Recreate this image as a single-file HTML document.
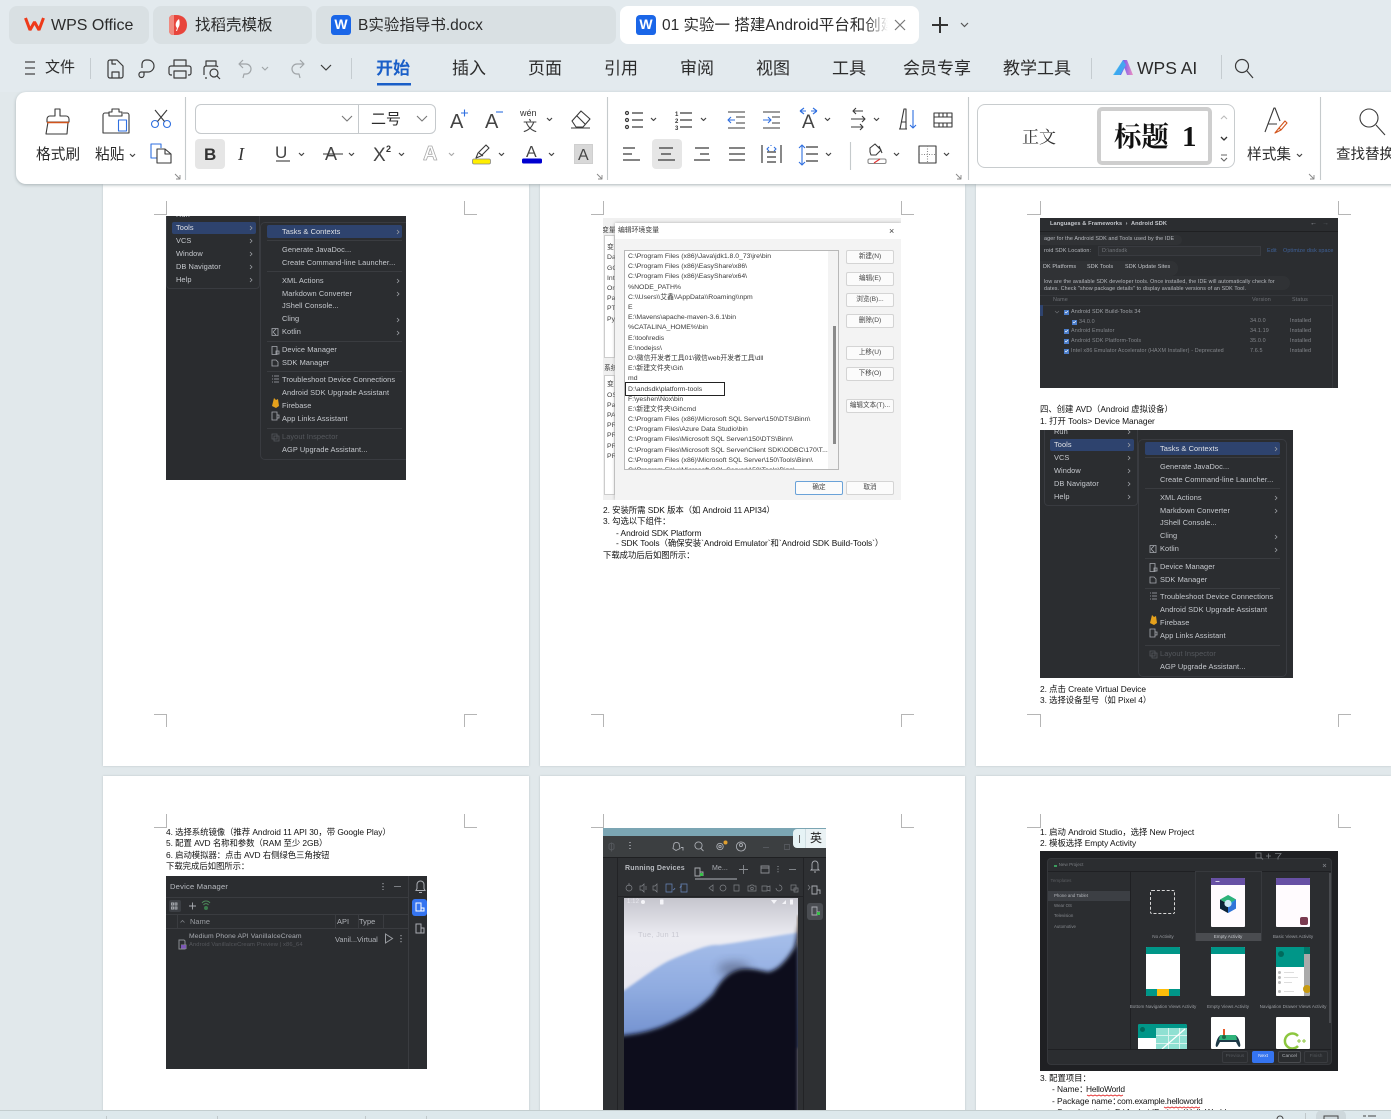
<!DOCTYPE html>
<html lang="zh-CN"><head><meta charset="utf-8"><title>WPS Office</title>
<style>
html,body{margin:0;padding:0;width:1391px;height:1119px;overflow:hidden;background:#e1e8eb}
body{position:relative;font-family:"Liberation Sans","Noto Sans CJK SC",sans-serif;color:#222}
.t{position:absolute;white-space:nowrap;line-height:0}
.a{position:absolute}
svg{position:absolute;left:0;top:0;overflow:visible}
.tab{position:absolute;top:6px;height:38px;border-radius:8px;background:#d9e0e3}
.m{font-size:17px;color:#2b2b2b;top:69px}
.r{font-size:14.7px;color:#2b2b2b}
.page{position:absolute;background:#fff;box-shadow:0 0 2px #b9c3c6}
.d{position:absolute;white-space:nowrap;line-height:0;font-size:8.4px;letter-spacing:-.05px;color:#111;font-family:"Liberation Sans","Noto Sans CJK SC",sans-serif}
.i{position:absolute;overflow:hidden;background:#2b2d30;filter:blur(.25px)}
.x{position:absolute;white-space:nowrap;line-height:0;font-size:7.4px;letter-spacing:.08px;color:#c6c9ce}
.w{position:absolute;white-space:nowrap;line-height:0;font-size:6.85px;color:#3a3a3a;font-family:"Liberation Sans","Noto Sans CJK SC",sans-serif}
.b{position:absolute;background:#fbfbfb;border:1px solid #d4d4d4;border-radius:2px;width:46px;height:12px;font-size:6.6px;line-height:12px;text-align:center;color:#444}
.s{position:absolute;white-space:nowrap;line-height:0;font-size:5.4px;letter-spacing:.12px;color:#a9acb2}
.n{position:absolute;white-space:nowrap;line-height:0;font-size:4.6px;color:#9a9da2;transform:translateX(-50%)}
.card{position:absolute;background:#fffbfe;overflow:hidden;border-radius:1px}
.sub{position:absolute;left:0;right:0;top:0;height:7px}
</style></head><body>

<!-- pages row 1 -->
<div class="page" style="left:103px;top:170px;width:426px;height:596px"></div>
<div class="page" style="left:540px;top:170px;width:425px;height:596px"></div>
<div class="page" style="left:976px;top:170px;width:415px;height:596px"></div>
<!-- pages row 2 -->
<div class="page" style="left:103px;top:776px;width:426px;height:340px"></div>
<div class="page" style="left:540px;top:776px;width:425px;height:340px"></div>
<div class="page" style="left:976px;top:776px;width:415px;height:340px"></div>

<!-- crop marks -->
<svg width="1391" height="1119" fill="none" stroke="#b5b5b5" stroke-width="1">
<path d="M154 214.5h13M166.5 201v14M464.5 201v14M464 214.5h13M154 714.5h13M166.5 714v13M464.5 714v13M464 714.5h13"/>
<path d="M591 214.5h13M603.5 201v14M901.5 201v14M901 214.5h13M591 714.5h13M603.5 714v13M901.5 714v13M901 714.5h13"/>
<path d="M1027 214.5h13M1040.5 201v14M1338.5 201v14M1338 214.5h13M1027 714.5h13M1040.5 714v13M1338.5 714v13M1338 714.5h13"/>
<path d="M154 827.5h13M166.5 814v14M464.5 814v14M464 827.5h13"/>
<path d="M591 827.5h13M603.5 814v14M901.5 814v14M901 827.5h13"/>
<path d="M1027 827.5h13M1040.5 814v14M1338.5 814v14M1338 827.5h13"/>
</svg>

<!-- image 1: tools menu -->
<div class="i" style="left:166px;top:216px;width:240px;height:264px">
 <div class="a" style="left:0;top:0;width:240px;height:264px">
  <div class="a" style="left:0;top:-20px;width:94px;height:93px;background:#2b2d30;border:1px solid #393b40;border-radius:4px;box-sizing:border-box"></div>
  <div class="a" style="left:0;top:73px;width:94px;height:191px;background:#2a2c2f"></div>
  <div class="a" style="left:94px;top:6px;width:160px;height:238px;background:#2b2d30;border:1px solid #393b40;border-radius:5px;box-sizing:border-box"></div>
  <div class="a" style="left:6px;top:5.5px;width:84px;height:12.5px;background:#2e436e;border-radius:2px"></div>
  <div class="a" style="left:101px;top:9px;width:135px;height:13px;background:#2e436e;border-radius:2px"></div>
  <svg width="240" height="264" fill="none" stroke="#3a3c40" stroke-width="1">
   <path d="M101 24.5h135M101 55.5h135M101 125.5h135M101 155.5h135M101 212.5h135"/>
   <path stroke="#9a9da2" stroke-width=".8" d="M84 10l2 2-2 2M84 23l2 2-2 2M84 36l2 2-2 2M84 49l2 2-2 2M84 62l2 2-2 2M231 14l2 2-2 2M231 63l2 2-2 2M231 76l2 2-2 2M231 102l2 2-2 2M231 115l2 2-2 2"/>
   <path stroke="#a9acb2" stroke-width=".8" d="M106 112.5h6v7h-6zM107 116l3-3M107 116l3 3M106 130.5h5v8h-5zM110 135h3v3h-3zM106 144h4l2 2v4h-6zM106 160h1M106 163h1M106 166h1M108 160h5M108 163h5M108 166h5M106 196h5v8h-5zM111 199h2v3h-2z"/>
   <path stroke="#55585d" stroke-width=".8" d="M106 218h5v5h-5zM108 220h5v5h-5z"/>
   <path fill="#e5a11c" stroke="none" d="M106 190l2-8 2 2 2-1 1 7-3 2z"/>
  </svg>
  <div class="x" style="left:10px;top:-1px">Run</div>
  <div class="x" style="left:10px;top:12px;color:#dfe1e5">Tools</div>
  <div class="x" style="left:10px;top:25px">VCS</div>
  <div class="x" style="left:10px;top:38px">Window</div>
  <div class="x" style="left:10px;top:51px">DB Navigator</div>
  <div class="x" style="left:10px;top:64px">Help</div>
  <div class="x" style="left:116px;top:15.5px;color:#dfe1e5">Tasks &amp; Contexts</div>
  <div class="x" style="left:116px;top:33.7px">Generate JavaDoc...</div>
  <div class="x" style="left:116px;top:46.7px">Create Command-line Launcher...</div>
  <div class="x" style="left:116px;top:64.5px">XML Actions</div>
  <div class="x" style="left:116px;top:77.5px">Markdown Converter</div>
  <div class="x" style="left:116px;top:90.3px">JShell Console...</div>
  <div class="x" style="left:116px;top:103px">Cling</div>
  <div class="x" style="left:116px;top:116px">Kotlin</div>
  <div class="x" style="left:116px;top:133.7px">Device Manager</div>
  <div class="x" style="left:116px;top:146.7px">SDK Manager</div>
  <div class="x" style="left:116px;top:164px">Troubleshoot Device Connections</div>
  <div class="x" style="left:116px;top:177px">Android SDK Upgrade Assistant</div>
  <div class="x" style="left:116px;top:190px">Firebase</div>
  <div class="x" style="left:116px;top:203px">App Links Assistant</div>
  <div class="x" style="left:116px;top:221px;color:#55585d">Layout Inspector</div>
  <div class="x" style="left:116px;top:234px">AGP Upgrade Assistant...</div>
 </div>
</div>

<!-- image 2: env var dialog -->
<div class="a" style="left:603px;top:218px;width:298px;height:282px;background:#f0f0f0;overflow:hidden;filter:blur(.25px)">
 <div class="a" style="left:1px;top:17px;width:11px;height:123px;background:#fff;border:1px solid #ccc;box-sizing:border-box"></div>
 <div class="a" style="left:1px;top:157px;width:11px;height:120px;background:#fff;border:1px solid #ccc;box-sizing:border-box"></div>
 <div class="w" style="left:-1px;top:13px">变量</div>
 <div class="w" style="left:4px;top:30px">变</div><div class="w" style="left:4px;top:40px">Da</div><div class="w" style="left:4px;top:51px">GC</div><div class="w" style="left:4px;top:61px">Int</div><div class="w" style="left:4px;top:71px">Or</div><div class="w" style="left:4px;top:81px">Pa</div><div class="w" style="left:4px;top:91px">PT</div><div class="w" style="left:4px;top:102px">Py</div>
 <div class="w" style="left:1px;top:151px">系统</div>
 <div class="w" style="left:4px;top:167px">变</div><div class="w" style="left:4px;top:178px">OS</div><div class="w" style="left:4px;top:188px">Pa</div><div class="w" style="left:4px;top:198px">PA</div><div class="w" style="left:4px;top:208px">PR</div><div class="w" style="left:4px;top:218px">PR</div><div class="w" style="left:4px;top:229px">PR</div><div class="w" style="left:4px;top:239px">PR</div>
 <div class="a" style="left:12px;top:5px;width:286px;height:277px;background:#f3f3f3;box-shadow:0 0 3px #aaa"></div>
 <div class="a" style="left:12px;top:5px;width:286px;height:16px;background:#fff"></div>
 <div class="w" style="left:15px;top:13px">编辑环境变量</div>
 <div class="w" style="left:286px;top:13px;font-size:9px">×</div>
 <div class="a" style="left:21px;top:32px;width:215px;height:220px;background:#fff;border:1px solid #b8b8b8;box-sizing:border-box;overflow:hidden">
  <div class="a" style="left:203px;top:0;width:10px;height:218px;background:#f3f3f3"></div>
  <div class="a" style="left:208px;top:75px;width:2.5px;height:118px;background:#8a8a8a"></div>
  <div class="w" style="left:3px;top:6px">C:\Program Files (x86)\Java\jdk1.8.0_73\jre\bin</div>
  <div class="w" style="left:3px;top:16.2px">C:\Program Files (x86)\EasyShare\x86\</div>
  <div class="w" style="left:3px;top:26.4px">C:\Program Files (x86)\EasyShare\x64\</div>
  <div class="w" style="left:3px;top:36.6px">%NODE_PATH%</div>
  <div class="w" style="left:3px;top:46.8px">C:\\Users\\艾鑫\\AppData\\Roaming\\npm</div>
  <div class="w" style="left:3px;top:57px">E</div>
  <div class="w" style="left:3px;top:67.2px">E:\Mavens\apache-maven-3.6.1\bin</div>
  <div class="w" style="left:3px;top:77.4px">%CATALINA_HOME%\bin</div>
  <div class="w" style="left:3px;top:87.5px">E:\tool\redis</div>
  <div class="w" style="left:3px;top:97.7px">E:\nodejss\</div>
  <div class="w" style="left:3px;top:107.9px">D:\微信开发者工具01\微信web开发者工具\dll</div>
  <div class="w" style="left:3px;top:118.1px">E:\新建文件夹\Git\</div>
  <div class="w" style="left:3px;top:128.3px">md</div>
  <div class="w" style="left:3px;top:138.5px">D:\andsdk\platform-tools</div>
  <div class="w" style="left:3px;top:148.7px">F:\yeshen\Nox\bin</div>
  <div class="w" style="left:3px;top:158.9px">E:\新建文件夹\Git\cmd</div>
  <div class="w" style="left:3px;top:169.1px">C:\Program Files (x86)\Microsoft SQL Server\150\DTS\Binn\</div>
  <div class="w" style="left:3px;top:179.3px">C:\Program Files\Azure Data Studio\bin</div>
  <div class="w" style="left:3px;top:189.4px">C:\Program Files\Microsoft SQL Server\150\DTS\Binn\</div>
  <div class="w" style="left:3px;top:199.6px">C:\Program Files\Microsoft SQL Server\Client SDK\ODBC\170\T...</div>
  <div class="w" style="left:3px;top:209.8px">C:\Program Files (x86)\Microsoft SQL Server\150\Tools\Binn\</div>
  <div class="w" style="left:3px;top:220px">C:\Program Files\Microsoft SQL Server\150\Tools\Binn\</div>
 </div>
 <div class="a" style="left:22px;top:164px;width:100px;height:14px;border:1.5px solid #222;box-sizing:border-box"></div>
 <div class="b" style="left:243px;top:32px">新建(N)</div>
 <div class="b" style="left:243px;top:54px">编辑(E)</div>
 <div class="b" style="left:243px;top:75px">浏览(B)...</div>
 <div class="b" style="left:243px;top:96px">删除(D)</div>
 <div class="b" style="left:243px;top:128px">上移(U)</div>
 <div class="b" style="left:243px;top:149px">下移(O)</div>
 <div class="b" style="left:243px;top:181px">编辑文本(T)...</div>
 <div class="b" style="left:192px;top:263px;border-color:#6aa2d8">确定</div>
 <div class="b" style="left:243px;top:263px">取消</div>
</div>

<!-- page 2 text -->
<div class="d" style="left:603px;top:510px">2. 安装所需 SDK 版本（如 Android 11 API34）</div>
<div class="d" style="left:603px;top:521px">3. 勾选以下组件：</div>
<div class="d" style="left:616px;top:532.5px">- Android SDK Platform</div>
<div class="d" style="left:616px;top:543px">- SDK Tools（确保安装`Android Emulator`和`Android SDK Build-Tools`）</div>
<div class="d" style="left:603px;top:555px">下载成功后后如图所示：</div>

<!-- page 3 image 1: SDK -->
<div class="i" style="left:1040px;top:218px;width:298px;height:170px">
 <div class="a" style="left:0;top:13px;width:298px;height:1px;background:#1f2022"></div>
 <div class="a" style="left:-10px;top:17px;width:152px;height:10px;background:#303235;border-radius:5px"></div>
 <div class="a" style="left:-10px;top:43px;width:148px;height:15px;background:#303235;border-radius:7px"></div>
 <div class="a" style="left:-10px;top:58px;width:260px;height:14px;background:#303235;border-radius:7px"></div>
 <div class="a" style="left:58px;top:28px;width:163px;height:10px;background:#2f3134;border:1px solid #393b40;box-sizing:border-box"></div>
 <div class="s" style="left:10px;top:6px;font-weight:bold;font-size:5.6px;color:#c6c9ce">Languages &amp; Frameworks &nbsp;› &nbsp;Android SDK</div>
 <div class="s" style="left:270px;top:6px;font-size:7px;color:#9a9da2">←</div><div class="s" style="left:282px;top:6px;font-size:7px;color:#55585d">→</div>
 <div class="s" style="left:4px;top:21px;color:#b8bbc0">ager for the Android SDK and Tools used by the IDE</div>
 <div class="s" style="left:4px;top:33px;color:#b8bbc0">roid SDK Location:</div>
 <div class="s" style="left:62px;top:33px;color:#75787d">D:\andsdk</div>
 <div class="s" style="left:227px;top:33px;color:#3f6299">Edit</div>
 <div class="s" style="left:243px;top:33px;color:#3f6299">Optimize disk space</div>
 <div class="s" style="left:3px;top:49px;color:#c6c9ce">DK Platforms</div>
 <div class="s" style="left:47px;top:49px;color:#c6c9ce">SDK Tools</div>
 <div class="s" style="left:85px;top:49px;color:#c6c9ce">SDK Update Sites</div>
 <div class="s" style="left:4px;top:64px;font-size:5.3px;color:#b8bbc0">low are the available SDK developer tools. Once installed, the IDE will automatically check for</div>
 <div class="s" style="left:4px;top:71px;font-size:5.3px;color:#b8bbc0">dates. Check "show package details" to display available versions of an SDK Tool.</div>
 <div class="a" style="left:0;top:77px;width:292px;height:1px;background:#35373b"></div>
 <div class="a" style="left:0;top:87px;width:292px;height:1px;background:#35373b"></div>
 <div class="a" style="left:292px;top:77px;width:1px;height:93px;background:#35373b"></div>
 <div class="a" style="left:0;top:87px;width:3px;height:11px;background:#2e436e"></div>
 <div class="s" style="left:13px;top:82px;color:#6f7277">Name</div>
 <div class="s" style="left:212px;top:82px;color:#6f7277">Version</div>
 <div class="s" style="left:252px;top:82px;color:#6f7277">Status</div>
 <div class="a" style="left:24px;top:91.5px;width:5px;height:5px;background:#4a7cc9"></div>
 <div class="a" style="left:32px;top:101.5px;width:5px;height:5px;background:#4a7cc9"></div>
 <div class="a" style="left:24px;top:110.5px;width:5px;height:5px;background:#4a7cc9"></div>
 <div class="a" style="left:24px;top:120.5px;width:5px;height:5px;background:#4a7cc9"></div>
 <div class="a" style="left:24px;top:130.5px;width:5px;height:5px;background:#4a7cc9"></div>
 <svg width="298" height="170" fill="none" stroke="#fff" stroke-width=".6"><path d="M25 94l1 1 2-2M33 104l1 1 2-2M25 113l1 1 2-2M25 123l1 1 2-2M25 133l1 1 2-2"/><path stroke="#6f7277" d="M15 93l2 2 2-2"/></svg>
 <div class="s" style="left:31px;top:94px;color:#a0a3a8">Android SDK Build-Tools 34</div>
 <div class="s" style="left:39px;top:104px;color:#85888d">34.0.0</div>
 <div class="s" style="left:31px;top:113px;color:#85888d">Android Emulator</div>
 <div class="s" style="left:31px;top:123px;color:#85888d">Android SDK Platform-Tools</div>
 <div class="s" style="left:31px;top:133px;color:#85888d">Intel x86 Emulator Accelerator (HAXM Installer) - Deprecated</div>
 <div class="s" style="left:210px;top:103px;color:#85888d">34.0.0</div><div class="s" style="left:250px;top:103px;color:#85888d">Installed</div>
 <div class="s" style="left:210px;top:113px;color:#85888d">34.1.19</div><div class="s" style="left:250px;top:113px;color:#85888d">Installed</div>
 <div class="s" style="left:210px;top:123px;color:#85888d">35.0.0</div><div class="s" style="left:250px;top:123px;color:#85888d">Installed</div>
 <div class="s" style="left:210px;top:133px;color:#85888d">7.6.5</div><div class="s" style="left:250px;top:133px;color:#85888d">Installed</div>
</div>

<div class="d" style="left:1040px;top:409px">四、创建 AVD（Android 虚拟设备）</div>
<div class="d" style="left:1040px;top:421px">1. 打开 Tools&gt; Device Manager</div>

<!-- page 3 image 2: tools menu again -->
<div class="i" style="left:1040px;top:430px;width:253px;height:248px">
 <div class="a" style="left:4px;top:3px;width:249px;height:245px">
  <div class="a" style="left:0;top:-20px;width:94px;height:93px;background:#2b2d30;border:1px solid #393b40;border-radius:4px;box-sizing:border-box"></div>
  <div class="a" style="left:94px;top:6px;width:149px;height:238px;background:#2b2d30;border:1px solid #393b40;border-radius:5px;box-sizing:border-box"></div>
  <div class="a" style="left:6px;top:5.5px;width:84px;height:12.5px;background:#2e436e;border-radius:2px"></div>
  <div class="a" style="left:101px;top:9px;width:135px;height:13px;background:#2e436e;border-radius:2px"></div>
  <svg width="240" height="264" fill="none" stroke="#3a3c40" stroke-width="1">
   <path d="M101 24.5h135M101 55.5h135M101 125.5h135M101 155.5h135M101 212.5h135"/>
   <path stroke="#9a9da2" stroke-width=".8" d="M84 -3l2 2-2 2M84 10l2 2-2 2M84 23l2 2-2 2M84 36l2 2-2 2M84 49l2 2-2 2M84 62l2 2-2 2M231 14l2 2-2 2M231 63l2 2-2 2M231 76l2 2-2 2M231 102l2 2-2 2M231 115l2 2-2 2"/>
   <path stroke="#a9acb2" stroke-width=".8" d="M106 112.5h6v7h-6zM107 116l3-3M107 116l3 3M106 130.5h5v8h-5zM110 135h3v3h-3zM106 144h4l2 2v4h-6zM106 160h1M106 163h1M106 166h1M108 160h5M108 163h5M108 166h5M106 196h5v8h-5zM111 199h2v3h-2z"/>
   <path stroke="#55585d" stroke-width=".8" d="M106 218h5v5h-5zM108 220h5v5h-5z"/>
   <path fill="#e5a11c" stroke="none" d="M106 190l2-8 2 2 2-1 1 7-3 2z"/>
  </svg>
  <div class="x" style="left:10px;top:-1px">Run</div>
  <div class="x" style="left:10px;top:12px;color:#dfe1e5">Tools</div>
  <div class="x" style="left:10px;top:25px">VCS</div>
  <div class="x" style="left:10px;top:38px">Window</div>
  <div class="x" style="left:10px;top:51px">DB Navigator</div>
  <div class="x" style="left:10px;top:64px">Help</div>
  <div class="x" style="left:116px;top:15.5px;color:#dfe1e5">Tasks &amp; Contexts</div>
  <div class="x" style="left:116px;top:33.7px">Generate JavaDoc...</div>
  <div class="x" style="left:116px;top:46.7px">Create Command-line Launcher...</div>
  <div class="x" style="left:116px;top:64.5px">XML Actions</div>
  <div class="x" style="left:116px;top:77.5px">Markdown Converter</div>
  <div class="x" style="left:116px;top:90.3px">JShell Console...</div>
  <div class="x" style="left:116px;top:103px">Cling</div>
  <div class="x" style="left:116px;top:116px">Kotlin</div>
  <div class="x" style="left:116px;top:133.7px">Device Manager</div>
  <div class="x" style="left:116px;top:146.7px">SDK Manager</div>
  <div class="x" style="left:116px;top:164px">Troubleshoot Device Connections</div>
  <div class="x" style="left:116px;top:177px">Android SDK Upgrade Assistant</div>
  <div class="x" style="left:116px;top:190px">Firebase</div>
  <div class="x" style="left:116px;top:203px">App Links Assistant</div>
  <div class="x" style="left:116px;top:221px;color:#55585d">Layout Inspector</div>
  <div class="x" style="left:116px;top:234px">AGP Upgrade Assistant...</div>
 </div>
</div>
<div class="d" style="left:1040px;top:689px">2. 点击 Create Virtual Device</div>
<div class="d" style="left:1040px;top:700px">3. 选择设备型号（如 Pixel 4）</div>

<!-- page 4 -->
<div class="d" style="left:166px;top:832px">4. 选择系统镜像（推荐 Android 11 API 30，带 Google Play）</div>
<div class="d" style="left:166px;top:843px">5. 配置 AVD 名称和参数（RAM 至少 2GB）</div>
<div class="d" style="left:166px;top:855px">6. 启动模拟器：点击 AVD 右侧绿色三角按钮</div>
<div class="d" style="left:166px;top:866px">下载完成后如图所示：</div>

<div class="i" style="left:166px;top:876px;width:261px;height:193px">
 <svg width="261" height="193" fill="none" stroke="#3a3c40">
  <path d="M0 21.5h242.5M0 38.5h242.5M0 52.5h242.5M242.5 0v193M11.5 38v14M169.5 38v14M192.5 38v14M217.5 38v14"/>
  <rect x="3" y="24" width="12" height="12" rx="2" fill="#3c3f44" stroke="none"/>
  <path stroke="#a9acb2" stroke-width=".9" d="M5.5 27h2v2h-2zM9 27h2v2H9zM5.5 31h2v2h-2zM9 31h2v2H9zM23 30h7M26.5 26.5v7"/>
  <path stroke="#4f8a5c" stroke-width="1" d="M36 27a5 5 0 0 1 8 0M37.5 29a3 3 0 0 1 5 0"/><circle cx="40" cy="32" r="2" fill="#3b7a4c" stroke="none"/>
  <path stroke="#7b7e83" d="M14.5 46.5l2-2 2 2" stroke-width=".8"/>
  <rect x="246" y="23" width="15" height="17" rx="3" fill="#3574f0" stroke="none"/>
  <path stroke="#a9acb2" stroke-width="1" d="M251 8.500a3.500 3.500 0 0 1 7 0v4l1 2h-9l1-2zM253 16.500h3"/>
  <path stroke="#fff" stroke-width="1" d="M250 27h5v8h-5zM255 32h3v3h-3z"/>
  <path stroke="#a9acb2" stroke-width="1" d="M250 48h5v9h-5zM255 52h3v5h-3z"/>
  <path stroke="#8a8d92" stroke-width="1" d="M13 64h5l1 1v8h-6zM15 69h5v4"/>
  <rect x="15" y="69" width="5" height="3.5" fill="#7d58b6" stroke="none"/>
  <path stroke="#9a9da2" stroke-width="1" d="M219.5 58v9l7-4.5z"/>
  <path stroke="#8a8d92" stroke-width="1.4" stroke-dasharray="1.2 1.8" d="M235 59v8M217 7v7"/>
  <path stroke="#7b7e83" d="M228 10.5h7"/>
 </svg>
 <div class="x" style="left:4px;top:10.5px;color:#b8bbc0;font-size:7.6px;letter-spacing:.2px">Device Manager</div>
 <div class="x" style="left:24px;top:45.5px;color:#9a9da2">Name</div>
 <div class="x" style="left:171px;top:45.5px;color:#b0b3b8">API</div>
 <div class="x" style="left:193px;top:45.5px;color:#b0b3b8">Type</div>
 <div class="x" style="left:23px;top:60.5px;color:#a9acb2;font-size:6.8px;letter-spacing:.1px">Medium Phone API VanillaIceCream</div>
 <div class="x" style="left:23px;top:68.5px;color:#55575c;font-size:5.8px;letter-spacing:.1px">Android VanillaIceCream Preview | x86_64</div>
 <div class="x" style="left:169px;top:64px;color:#b0b3b8;letter-spacing:0">Vanil...</div>
 <div class="x" style="left:191px;top:64px;color:#b0b3b8;letter-spacing:0">Virtual</div>
</div>

<!-- page 5: running devices -->
<div class="i" style="left:603px;top:828px;width:223px;height:282px;background:#2e3033">
 <div class="a" style="left:0;top:0;width:223px;height:8px;background:#7ba5b3"></div>
 <div class="a" style="left:0;top:8px;width:223px;height:21px;background:#3c3f41"></div>
 <div class="a" style="left:0;top:29px;width:223px;height:1px;background:#1f2022"></div>
 <div class="a" style="left:14px;top:30px;width:1px;height:252px;background:#222326"></div>
 <div class="a" style="left:200px;top:30px;width:1px;height:252px;background:#222326"></div>
 <div class="a" style="left:204px;top:75px;width:16px;height:17px;background:#4a4d52;border-radius:3px"></div>
 <div class="a" style="left:15px;top:68px;width:185px;height:1px;background:#222326"></div>
 <div class="a" style="left:92px;top:50px;width:42px;height:1.5px;background:#6f7277"></div>
 <div class="x" style="left:22px;top:41px;font-weight:bold;font-size:7px;color:#b8bbc0;letter-spacing:.2px">Running Devices</div>
 <div class="x" style="left:109px;top:41px;font-size:7px;color:#a9acb2">Me...</div>
 <svg width="223" height="282" fill="none" stroke="#a9acb2" stroke-width=".9">
  <g transform="translate(0 -1.500)">
  <path stroke="#55585d" d="M6 18a3 3 0 0 1 5 0v4a3 3 0 0 1-5 0zM8.500 16v9"/>
  <path stroke-dasharray="1 2" stroke-width="1.400" d="M27 15.500v7"/>
  <path d="M71 17a3.500 3.500 0 0 1 5 0l1 5-4 2-3-2zM78 21h2v3"/>
  <circle cx="95.500" cy="19" r="3.600"/><path d="M98 22l2.500 2.500"/>
  <circle cx="117" cy="20" r="3.200"/><circle cx="117" cy="20" r="1.200"/>
  <circle cx="122.500" cy="16" r="2" fill="#e0a030" stroke="none"/>
  <circle cx="138" cy="20" r="4.600"/><circle cx="138" cy="18.500" r="1.500"/>
  <path stroke="#55585d" d="M160 21h6M181.500 18h5v5h-5z"/>
  </g>
  <path d="M92 40h5v8h-5zM97 44h3v4"/><rect x="97" y="45" width="3" height="3" fill="#39c24a" stroke="none"/>
  <path stroke="#8a8d92" d="M136 41.500h9M140.500 37v9M158 38h8v7h-8zM158 40h8"/>
  <path stroke="#8a8d92" stroke-width="1.200" stroke-dasharray="1 1.600" d="M175 38v7"/><path stroke="#8a8d92" d="M186 41.500h7"/>
  <path d="M209 41l0-5a3 3 0 0 1 6 0v5l1 1h-8zM211 44h2M209 58h5v8h-5zM214 62h3v4M209 79h5v8h-5zM214 84h3"/>
  <rect x="214" y="84" width="3" height="3" fill="#39c24a" stroke="none"/>
  <g stroke="#7f8287" stroke-width=".7">
   <circle cx="26" cy="60" r="3"/><path d="M26 55v3"/>
   <path d="M37 58h2l2-2v8l-2-2h-2zM43 58v4M50 58h2l2-2v8l-2-2h-2z"/>
   <path stroke="#6a88be" d="M63 56h6v8h-6zM72 60a3 3 0 0 1-2 2"/><path stroke="#6a88be" d="M78 56h6v8h-6zM77 60a2 2 0 0 1 2-2"/>
   <path d="M106 60l4-3v6zM120 60m-3 0a3 3 0 1 0 6 0a3 3 0 1 0-6 0M131 57h5v6h-5zM145 58h2l1-1h2l1 1h2v5h-8z"/>
   <circle cx="149" cy="60.500" r="1.300"/>
   <path d="M159 58h5v5h-5zM164 59l3-1v5l-3-1zM173 60a3 3 0 1 0 3-3M188 57h5v5h-5zM191 60h4v4h-4zM205 57l2 2.500-2 2.500"/>
  </g>
 </svg>
 <!-- phone -->
 <svg width="223" height="282" style="left:0;top:0">
  <defs>
   <linearGradient id="lg" x1="0" y1="0" x2="0" y2="1"><stop offset="0" stop-color="#c6c6ce"/><stop offset=".18" stop-color="#ececf2"/><stop offset=".6" stop-color="#e4e4f0"/><stop offset="1" stop-color="#dcdcea"/></linearGradient>
   <linearGradient id="bg" x1="0" y1="0" x2="0" y2="1"><stop offset="0" stop-color="#a7bfea"/><stop offset=".5" stop-color="#8fabe0"/><stop offset="1" stop-color="#6d8ccc"/></linearGradient>
   <filter id="bl" x="-5%" y="-5%" width="110%" height="110%"><feGaussianBlur stdDeviation="2"/></filter>
   <filter id="bl2" x="-5%" y="-5%" width="110%" height="110%"><feGaussianBlur stdDeviation="1.200"/></filter>
   <filter id="bl3" x="-40%" y="-60%" width="180%" height="220%"><feGaussianBlur stdDeviation="5"/></filter>
   <clipPath id="ph"><rect x="21" y="70" width="174" height="212"/></clipPath>
  </defs>
  <g clip-path="url(#ph)">
   <rect x="21" y="70" width="174" height="212" fill="url(#lg)"/>
   <path filter="url(#bl2)" fill="url(#bg)" d="M10 170C40 150 55 137 72 130C90 123 105 116 116 117C140 114 170 108 200 104V220H10Z"/>
   <ellipse filter="url(#bl3)" cx="131" cy="141" rx="16" ry="7" fill="#2a2c3c" opacity=".4"/>
   <path filter="url(#bl)" fill="#10111a" d="M10 208C40 207 60 199 75 191C90 184 100 176 110 166C118 152 125 145 135 142C145 139 155 142 165 144C175 142 183 133 191 120C194 112 194 100 196 96V290H10Z"/>
   <path filter="url(#bl)" fill="#6a5a48" d="M194 88l3 0 0 30-3 0z"/>
  </g>
 </svg>
 <div class="x" style="left:24px;top:74px;font-size:6px;color:#e8e8ee">1:12</div>
 <div class="x" style="left:35px;top:107px;font-size:7.4px;color:#c9c9d2;letter-spacing:.3px">Tue, Jun 11</div>
 <svg width="223" height="282" fill="#f4f4f8" stroke="none">
  <circle cx="40" cy="74" r="2"/><rect x="57" y="71.500" width="3.500" height="5" rx=".6"/>
  <path d="M168 72h6l-3 4zM179 76l4-4v4zM187 71.500h3v5h-3z"/>
 </svg>
 <!-- IME -->
 <div class="a" style="left:190px;top:1px;width:33px;height:19px;background:#e6f3f5;border-radius:4px 0 0 4px"></div>
 <div class="a" style="left:202px;top:1px;width:21px;height:19px;background:#eaf2f4;border-left:1px solid #cfdde1;box-sizing:border-box"></div>
 <div class="a" style="left:196px;top:7px;width:1px;height:8px;background:#666"></div>
 <div class="t" style="left:207px;top:10px;font-size:12px;color:#222">英</div>
</div>

<!-- page 6 -->
<div class="d" style="left:1040px;top:832px">1. 启动 Android Studio，选择 New Project</div>
<div class="d" style="left:1040px;top:843px">2. 模板选择 Empty Activity</div>

<div class="i" style="left:1040px;top:851px;width:298px;height:220px;background:#1f2023">
 <div class="a" style="left:7px;top:7px;width:285px;height:207px;background:#2b2d30;border:1px solid #35373b;border-radius:4px;box-sizing:border-box"></div>
 <div class="a" style="left:90px;top:21px;width:1px;height:178px;background:#1f2023"></div>
 <div class="a" style="left:8px;top:20px;width:283px;height:1px;background:#1f2023"></div>
 <div class="a" style="left:8px;top:198px;width:283px;height:1px;background:#1f2023"></div>
 <div class="a" style="left:8px;top:40px;width:82px;height:10px;background:#3c3f44"></div>
 <div class="a" style="left:289px;top:22px;width:2px;height:150px;background:#4a4c50"></div>
 <div class="a" style="left:14px;top:14px;width:3px;height:1.500px;background:#3a9c5c"></div>
 <div class="n" style="left:31px;top:14px;font-size:4.6px;color:#7b7e83">New Project</div>
 <div class="n" style="left:21px;top:30px;color:#5a5c60">Templates</div>
 <div class="s" style="left:14px;top:45px;font-size:4.4px;letter-spacing:0;color:#b0b3b8">Phone and Tablet</div>
 <div class="s" style="left:14px;top:55px;font-size:4.4px;letter-spacing:0;color:#85888d">Wear OS</div>
 <div class="s" style="left:14px;top:65px;font-size:4.4px;letter-spacing:0;color:#85888d">Television</div>
 <div class="s" style="left:14px;top:76px;font-size:4.4px;letter-spacing:0;color:#85888d">Automotive</div>
 <div class="a" style="left:155px;top:20px;width:67px;height:70px;border:1px solid #37393d;box-sizing:border-box"></div>
 <div class="a" style="left:156px;top:82px;width:65px;height:8px;background:#4a4c50"></div>
 <div class="a" style="left:110px;top:39px;width:25px;height:24px;border:1.500px dashed #d8d8d8;border-radius:2px;box-sizing:border-box"></div>
 <div class="n" style="left:123px;top:86px">No Activity</div>
 <div class="n" style="left:188px;top:86px;color:#c6c9ce">Empty Activity</div>
 <div class="n" style="left:253px;top:86px">Basic Views Activity</div>
 <div class="card" style="left:171px;top:27px;width:34px;height:49px"><div class="sub" style="background:#6750a4"></div></div>
 <svg width="298" height="220">
  <path fill="#1f8fe0" d="M188 44l8 4.500v9l-8 4.500z"/><path fill="#0a1a2a" d="M188 62l-8-4.500v-9l8 4.500z" />
  <path fill="#2fb37a" d="M180 48.500l8-4.500 8 4.500-8 4.500z"/><path fill="#0d2438" d="M180 48.500v9l8 4.500v-5z"/><path fill="#3173d8" d="M196 48.500v9l-8 4.500v-5z"/>
  <circle cx="188" cy="52.500" r="3.600" fill="#cfeaf6"/>
  <path stroke="#fff" stroke-width=".7" fill="none" d="M175.500 30.500h4M242 30.500h4M110 99.500h4M175 99.500h4"/>
 </svg>
 <div class="card" style="left:236px;top:27px;width:34px;height:49px"><div class="sub" style="background:#6750a4"></div><div class="a" style="left:24px;top:39px;width:8px;height:8px;background:#7a3a50;border-radius:2px"></div></div>
 <div class="card" style="left:106px;top:96px;width:34px;height:49px;background:#fff"><div class="sub" style="background:#009688"></div><div class="a" style="left:0;top:42px;width:34px;height:7px;background:#009688"></div><div class="a" style="left:11px;top:42px;width:12px;height:7px;background:#fcbd0a"></div></div>
 <div class="card" style="left:171px;top:96px;width:34px;height:49px;background:#fff"><div class="sub" style="background:#009688"></div></div>
 <div class="card" style="left:236px;top:96px;width:34px;height:49px;background:#aaa">
  <div class="a" style="left:0;top:0;width:28px;height:49px;background:#fff"></div>
  <div class="a" style="left:0;top:0;width:34px;height:7px;background:#00796b"></div>
  <div class="a" style="left:0;top:0;width:28px;height:20px;background:#009688"></div>
  <div class="a" style="left:2px;top:4px;width:6px;height:6px;border-radius:50%;background:#00695c"></div>
  <div class="a" style="left:2px;top:24px;width:3px;height:3px;border-radius:50%;background:#bbb"></div><div class="a" style="left:8px;top:25px;width:10px;height:1px;background:#ddd"></div>
  <div class="a" style="left:2px;top:29px;width:3px;height:3px;border-radius:50%;background:#bbb"></div><div class="a" style="left:8px;top:30px;width:14px;height:1px;background:#ddd"></div>
  <div class="a" style="left:2px;top:34px;width:3px;height:3px;border-radius:50%;background:#bbb"></div><div class="a" style="left:8px;top:35px;width:8px;height:1px;background:#ddd"></div>
  <div class="a" style="left:2px;top:43px;width:3px;height:3px;border-radius:50%;background:#bbb"></div><div class="a" style="left:8px;top:44px;width:10px;height:1px;background:#ddd"></div>
  <div class="a" style="left:27px;top:38px;width:8px;height:8px;border-radius:50%;background:#c79a10"></div>
 </div>
 <div class="n" style="left:123px;top:156px">Bottom Navigation Views Activity</div>
 <div class="n" style="left:188px;top:156px">Empty Views Activity</div>
 <div class="n" style="left:253px;top:156px">Navigation Drawer Views Activity</div>
 <div class="card" style="left:98px;top:173px;width:49px;height:25px;background:#8fe0d2;border-radius:2px 2px 0 0">
  <div class="a" style="left:0;top:0;width:49px;height:4px;background:#009688"></div>
  <div class="a" style="left:0;top:0;width:18px;height:14px;background:#009688"></div>
  <div class="a" style="left:0;top:14px;width:18px;height:11px;background:#fff"></div>
  <div class="a" style="left:2px;top:3px;width:5px;height:5px;border-radius:50%;background:#00695c"></div>
  <div class="a" style="left:30px;top:4px;width:1px;height:21px;background:#d8f4ee"></div>
  <div class="a" style="left:41px;top:4px;width:1px;height:21px;background:#d8f4ee"></div>
  <div class="a" style="left:18px;top:11px;width:31px;height:1px;background:#d8f4ee"></div>
  <div class="a" style="left:18px;top:19px;width:31px;height:1px;background:#d8f4ee"></div>
  <svg width="49" height="25" stroke="#fff"><path d="M24 25L47 5" stroke-width="1.200"/></svg>
 </div>
 <div class="card" style="left:171px;top:166px;width:34px;height:32px;background:#fff">
  <svg width="34" height="32"><path fill="#1f3a48" d="M9 25q-2 4-3 5-2 0-1-4 2-8 6-8h12q4 0 6 8 1 4-1 4-1-1-3-5z"/><path fill="#2fb37a" d="M9 18h16l1 5H8z"/><circle cx="13" cy="20" r="2" fill="#1f6a4a"/><path stroke="#e85a2a" stroke-width="2" d="M13 12v6"/></svg>
 </div>
 <div class="card" style="left:236px;top:166px;width:34px;height:32px;background:#fff">
  <svg width="34" height="32" fill="none"><path stroke="#8cc63f" stroke-width="2.500" d="M22 19a7.500 7.500 0 1 0 0 10"/><path stroke="#8cc63f" stroke-width="1" d="M21 24h4M23 22v4M26 24h4M28 22v4"/></svg>
 </div>
 <div class="a" style="left:182px;top:200px;width:26px;height:12px;border:1px solid #3a3c40;border-radius:2px;box-sizing:border-box;font-size:4.800px;line-height:10px;text-align:center;color:#55585d">Previous</div>
 <div class="a" style="left:212px;top:200px;width:22px;height:12px;background:#3574f0;border-radius:2px;font-size:4.800px;line-height:12px;text-align:center;color:#e8ecf4">Next</div>
 <div class="a" style="left:238px;top:200px;width:23px;height:12px;border:1px solid #4a4c50;border-radius:2px;box-sizing:border-box;font-size:4.800px;line-height:10px;text-align:center;color:#b0b3b8">Cancel</div>
 <div class="a" style="left:264px;top:200px;width:24px;height:12px;border:1px solid #3a3c40;border-radius:2px;box-sizing:border-box;font-size:4.800px;line-height:10px;text-align:center;color:#55585d">Finish</div>
 <svg width="298" height="220" fill="none" stroke="#7b7e83" stroke-width=".8"><path d="M216 2h5v5h-5zM221 6.500l2 2M226 5h5M228.500 2.500v5M235 2.500h6l-3 4v2"/><path d="M283 13l3 3M286 13l-3 3" /></svg>
</div>

<div class="d" style="left:1040px;top:1078px">3. 配置项目：</div>
<div class="d" style="left:1052px;top:1089px">- Name：<span style="margin-left:-1.500px;letter-spacing:-.2px">HelloWorld</span></div>
<div class="d" style="left:1052px;top:1101px">- Package name：<span style="margin-left:-3.500px;letter-spacing:-.2px">com.example.helloworld</span></div>
<div class="d" style="left:1052px;top:1112px">- Save location：D:\AndroidProjects\HelloWorld</div>
<svg width="1391" height="1119" fill="none" stroke="#e02020" stroke-width=".8">
<path d="M1087 1095l2 1 2-1 2 1 2-1 2 1 2-1 2 1 2-1 2 1 2-1 2 1 2-1 2 1 2-1 2 1 2-1 2 1 2-1"/>
<path d="M1164 1107l2 1 2-1 2 1 2-1 2 1 2-1 2 1 2-1 2 1 2-1 2 1 2-1 2 1 2-1 2 1 2-1 2 1 2-1"/>
</svg>

<!-- bottom bar -->
<div class="a" style="left:0;top:1110px;width:1391px;height:9px;background:#dde8ec;border-top:1px solid #c3cdcf;box-sizing:border-box"></div>
<div class="a" style="left:1316px;top:1110px;width:30px;height:9px;background:#ced8dc;border-radius:6px 6px 0 0"></div>
<svg width="1391" height="1119" fill="none" stroke="#c0c8cb">
<path d="M106.500 1116v3M217.500 1116v3M365.500 1116v3M426.500 1116v3M1305.500 1113v6"/>
<path stroke="#444" d="M1324 1119v-3h14v3M1363 1116h3M1368 1116h8M1277 1119a3 3 0 0 1 6 0"/>
</svg>

<!-- title bar -->
<div class="a" style="left:0;top:0;width:1391px;height:92px;background:#e3eaee"></div>
<div class="tab" style="left:9px;width:140px"></div>
<div class="tab" style="left:153px;width:159px"></div>
<div class="tab" style="left:316px;width:300px"></div>
<div class="tab" style="left:620px;width:299px;background:#fff"></div>
<div class="t" style="left:51px;top:25.500px;font-size:16px;color:#2b2b2b">WPS Office</div>
<div class="t" style="left:195px;top:26px;font-size:15.500px;color:#2b2b2b">找稻壳模板</div>
<div class="t" style="left:358px;top:26px;font-size:15.500px;color:#2b2b2b">B实验指导书.docx</div>
<div class="t" style="left:662px;top:26px;width:226px;overflow:hidden;line-height:20px;margin-top:-10px;font-size:15.500px;color:#2b2b2b;-webkit-mask-image:linear-gradient(90deg,#000 90%,transparent)">01 实验一 搭建Android平台和创建第一个应用</div>
<div class="a" style="left:331px;top:15px;width:20px;height:20px;background:#1a66e8;border-radius:4px 4px 3px 3px;color:#fff;font-weight:bold;font-size:14px;line-height:19px;text-align:center">W</div>
<div class="a" style="left:636px;top:15px;width:20px;height:20px;background:#1a66e8;border-radius:4px 4px 3px 3px;color:#fff;font-weight:bold;font-size:14px;line-height:19px;text-align:center">W</div>
<svg width="1391" height="92" fill="none" stroke="#333">
 <path stroke="#ee3a1a" stroke-width="3" stroke-linejoin="bevel" d="M25.500 18l4.500 12 4.500-8 4.500 8 4.500-12"/>
 <path fill="#e8453c" stroke="none" d="M169 19a4 4 0 0 1 4-4h3c7 0 11 4 11 10s-4 10-11 10h-3a4 4 0 0 1-4-4z"/>
 <path fill="#f08a80" stroke="none" d="M169 19a4 4 0 0 1 4-4h1v20h-1a4 4 0 0 1-4-4z"/>
 <path fill="#fff" stroke="none" d="M179 19c1 3 1 7-1 9l-1 3-1 0 1-3c-2-2-2-6 2-9z"/>
 <path stroke="#777" stroke-width="1.200" d="M895 20l10 10M905 20l-10 10"/>
 <path stroke="#333" stroke-width="2" d="M932 25h16M940 17v16"/>
 <path stroke="#555" stroke-width="1.200" d="M961 23l3.500 3.500 3.500-3.500"/>

 <!-- menu row icons -->
 <path stroke="#444" stroke-width="1.300" d="M25 62h10M25 68h10M25 74h10"/>
 <path stroke="#c5ccd0" d="M90.500 58v21M351.500 58v21M1091.500 58v21M1221.500 55v24"/>
 <g stroke="#3a3a3a" stroke-width="1.200" stroke-linejoin="round">
  <path d="M108 62a2 2 0 0 1 2-2h7l6 6v10a2 2 0 0 1-2 2h-11a2 2 0 0 1-2-2zM112 78v-6h7v6M112 60v4h4"/>
  <path d="M144 72v3a2.500 2.500 0 0 1-5 0 2.500 2.500 0 0 1 2-3h7a5.500 5.500 0 0 0 0-12h-2a4 4 0 0 0-4 4v4"/>
  <path d="M174 66v-6h12v6M172 75h-1a2 2 0 0 1-2-2v-5a2 2 0 0 1 2-2h18a2 2 0 0 1 2 2v5a2 2 0 0 1-2 2h-1M174 71h12v7h-12z"/>
  <path d="M206 66v-5h10v5M204 75v-7a2 2 0 0 1 2-2h10a2 2 0 0 1 2 1M207 78h-2"/><circle cx="214" cy="73" r="4"/><path d="M217 76l3 3"/>
  <path stroke="#a0a5a8" d="M243 60l-4 4 4 4M240 64h6a5 5 0 0 1 0 10h-2l-1 4"/>
  <path stroke="#a0a5a8" d="M300 60l4 4-4 4M303 64h-6a5 5 0 0 0 0 10h2l1 4"/>
  <path stroke="#a0a5a8" d="M262 67l3 3 3-3"/>
  <path d="M321 65l5 5 5-5"/>
  <circle cx="1242" cy="66" r="6.500"/><path d="M1247 71l6 7"/>
 </g>
 <rect x="377" y="83" width="34" height="2.500" fill="#1a5fc8" stroke="none"/>
 <defs><linearGradient id="ai" x1="0" y1="0" x2="1" y2="0"><stop offset="0" stop-color="#3a6cf0"/><stop offset=".5" stop-color="#7a5cf0"/><stop offset="1" stop-color="#f08fc0"/></linearGradient></defs>
 <path fill="url(#ai)" stroke="none" d="M1123 60h4l6 15h-6l-2.500-7-3.500 7h-7z"/>
 <path fill="#38b8f0" stroke="none" d="M1123 60l3 5-6 10h-7z" opacity=".8"/>
</svg>
<div class="t" style="left:45px;top:68px;font-size:15px;color:#2b2b2b">文件</div>
<div class="t m" style="left:376px;font-weight:bold;color:#1a5fc8">开始</div>
<div class="t m" style="left:452px">插入</div>
<div class="t m" style="left:528px">页面</div>
<div class="t m" style="left:604px">引用</div>
<div class="t m" style="left:680px">审阅</div>
<div class="t m" style="left:756px">视图</div>
<div class="t m" style="left:832px">工具</div>
<div class="t m" style="left:903px">会员专享</div>
<div class="t m" style="left:1003px">教学工具</div>
<div class="t m" style="left:1137px;font-size:17.500px;top:68px">WPS AI</div>

<!-- ribbon -->
<div class="a" style="left:16px;top:92px;width:1400px;height:92px;background:#fff;border-radius:10px 0 0 10px;box-shadow:0 1px 3px #a9b3b6"></div>
<div class="a" style="left:195px;top:104px;width:241px;height:30px;border:1px solid #c5c9cc;border-radius:6px;box-sizing:border-box"></div>
<div class="a" style="left:358px;top:104px;width:1px;height:30px;background:#c5c9cc"></div>
<div class="a" style="left:195px;top:139px;width:30px;height:30px;background:#e6e6e6;border-radius:4px"></div>
<div class="a" style="left:574px;top:144px;width:19px;height:20px;background:#d8d8d8;border:1px solid #cfcfcf;box-sizing:border-box"></div>
<div class="a" style="left:652px;top:139px;width:30px;height:30px;background:#e6e6e6;border-radius:4px"></div>
<div class="a" style="left:977px;top:104px;width:258px;height:64px;border:1px solid #c8ccce;border-radius:8px;box-sizing:border-box"></div>
<div class="a" style="left:1097px;top:107px;width:115px;height:58px;border:4px solid #cecece;border-radius:5px;box-sizing:border-box;background:#fff"></div>
<div class="t r" style="left:36px;top:155px">格式刷</div>
<div class="t r" style="left:95px;top:155px">粘贴</div>
<div class="t r" style="left:371px;top:120px;font-size:15px">二号</div>
<div class="t r" style="left:1247px;top:155px">样式集</div>
<div class="t r" style="left:1336px;top:155px;font-size:14.500px">查找替换</div>
<div class="t" style="left:1022px;top:137.500px;font-family:'Liberation Serif','Noto Serif CJK SC',serif;font-size:17px;color:#333">正文</div>
<div class="t" style="left:1114px;top:137px;font-family:'Liberation Serif','Noto Serif CJK SC',serif;font-weight:bold;font-size:27.500px;color:#111">标题</div>
<div class="t" style="left:1182px;top:137px;font-family:'Liberation Serif',serif;font-weight:bold;font-size:29px;color:#111">1</div>

<svg width="1391" height="190" fill="none" stroke="#3a3a3a" stroke-width="1.100" stroke-linejoin="round" font-family="Liberation Sans" font-size="19">
 <g stroke="#c5cacc"><path d="M185.500 97v83M607.500 97v83M968.500 97v83M1320.500 97v83M850.500 142v28"/></g>
 <!-- brush -->
 <path d="M55 109h5v7h6a3 3 0 0 1 3 3v3H47v-3a3 3 0 0 1 3-3h5zM48 122l-2 12h21l1-12"/>
 <path stroke="#d2541c" stroke-width="1.400" d="M47 122.500h22"/>
 <!-- paste -->
 <path d="M109 113h-4a2 2 0 0 0-2 2v18h26v-18a2 2 0 0 0-2-2h-4M109 116v-4h3v-3h7v3h3v4z"/>
 <rect x="118.500" y="120" width="8" height="11" stroke="#2f6fe0"/>
 <!-- cut -->
 <g stroke="#2f6fe0"><circle cx="155" cy="124" r="3.500"/><circle cx="167" cy="124" r="3.500"/></g>
 <path d="M157.500 121.500L167 110M164.500 121.500L155 110"/>
 <!-- copy -->
 <path stroke="#2f6fe0" d="M157 158h-6v-14h10v4"/>
 <path d="M157 149h8l6 5v9h-14zM165 149v5h6"/>
 <!-- corners -->
 <g stroke="#888" stroke-width=".9"><path d="M175 174l5 5M180 175v4h-4M597 174l5 5M602 175v4h-4M956 174l5 5M961 175v4h-4M1309 174l5 5M1314 175v4h-4"/></g>
 <!-- chevrons -->
 <g stroke="#444" stroke-width="1.200">
  <path d="M130 154l2.500 2.500 2.500-2.500M299 153l2.500 2.500 2.500-2.500M349 153l2.500 2.500 2.500-2.500M399 153l2.500 2.500 2.500-2.500M499 153l2.500 2.500 2.500-2.500M549 153l2.500 2.500 2.500-2.500M547 118l2.500 2.500 2.500-2.500M651 118l2.500 2.500 2.500-2.500M701 118l2.500 2.500 2.500-2.500M825 118l2.500 2.500 2.500-2.500M874 118l2.500 2.500 2.500-2.500M826 153l2.500 2.500 2.500-2.500M894 153l2.500 2.500 2.500-2.500M944 153l2.500 2.500 2.500-2.500M1297 154l2.500 2.500 2.500-2.500"/>
  <path stroke="#aaa" d="M449 153l2.500 2.500 2.500-2.500"/>
 </g>
 <path stroke="#777" d="M342 116l5 5 5-5M417 116l5 5 5-5"/>
 <!-- A+ A- -->
 <text x="450" y="128" stroke="none" fill="#444" font-size="20">A</text>
 <path stroke="#2f6fe0" d="M461 113h7M464.500 109.500v7"/>
 <text x="485" y="128" stroke="none" fill="#444" font-size="20">A</text>
 <path stroke="#2f6fe0" d="M496 112h7"/>
 <text x="520" y="116" stroke="none" fill="#333" font-size="9">wén</text>
 <text x="523" y="131" stroke="none" fill="#444" font-size="14" font-family="Noto Sans CJK SC">文</text>
 <!-- eraser -->
 <path d="M572 121l9-10 9 8-7 8h-7zM577 116l8 8M571 128h19"/>
 <text x="204" y="160" stroke="none" fill="#333" font-size="17" font-weight="bold">B</text>
 <text x="238" y="160" stroke="none" fill="#333" font-size="18" font-style="italic" font-family="Liberation Serif">I</text>
 <text x="275" y="158" stroke="none" fill="#444" font-size="17">U</text><path d="M276 161h14"/>
 <text x="325" y="160" stroke="none" fill="#444" font-size="18">A</text><path d="M323 154h20" stroke="#333" />
 <text x="373" y="161" stroke="none" fill="#444" font-size="19">X</text><text x="386" y="152" stroke="none" fill="#333" font-size="9" font-weight="bold">2</text>
 <text x="423" y="160" stroke="#aaa" stroke-width=".8" fill="#fff" font-size="20" font-weight="bold">A</text>
 <path d="M476 158l2-5 8-8 3 3-8 8-5 2zM479 153l4 3"/>
 <rect x="472.500" y="159" width="18" height="5" rx="1.500" fill="#ffee00" stroke="#888" stroke-width=".8"/>
 <text x="526" y="157" stroke="none" fill="#444" font-size="16">A</text>
 <rect x="522" y="158.500" width="20" height="5" rx="1.500" fill="#0000d0" stroke="none"/>
 <text x="578" y="160" stroke="none" fill="#444" font-size="16">A</text>
 <!-- lists -->
 <g stroke-width="1.200">
  <path d="M632 113h11M632 120h11M632 127h11M680 113h12M680 120h12M680 127h12"/>
  <circle cx="627" cy="113" r="1.500"/><circle cx="627" cy="120" r="1.500"/><circle cx="627" cy="127" r="1.500"/>
 </g>
 <text x="675" y="116" stroke="none" fill="#333" font-size="6" font-weight="bold">1</text>
 <text x="675" y="123" stroke="none" fill="#333" font-size="6" font-weight="bold">2</text>
 <text x="675" y="130" stroke="none" fill="#333" font-size="6" font-weight="bold">3</text>
 <!-- indents -->
 <path d="M728 112h17M728 128h17M736 117h9M736 123h9"/><path stroke="#2f6fe0" d="M735 120h-7M731 117l-3 3 3 3"/>
 <path d="M763 112h17M763 128h17M772 117h8M772 123h8"/><path stroke="#2f6fe0" d="M763 120h8M768 117l3 3-3 3"/>
 <!-- A dir -->
 <text x="802" y="128" stroke="none" fill="#444" font-size="19">A</text>
 <path stroke="#2f6fe0" d="M800 111l4-3M800 111l4 3M800 111h6M817 111l-4-3M817 111l-4 3M817 111h-6"/>
 <!-- transpose -->
 <path d="M863 111h-10M856 108l-3 3 3 3M851 119h14M862 116l3 3-3 3M851 127h12M860 124l3 3-3 3"/>
 <!-- sort -->
 <path d="M900 129l4-20h2v20zM901 122h5M899 129h8"/><path stroke="#2f6fe0" d="M913 110v18M910 125l3 3 3-3"/>
 <!-- table ruler -->
 <path d="M934 113h18v14h-18zM934 117h18M934 123h18M939 113v4M943 113v4M947 113v4M939 123v4M943 123v4M947 123v4"/>
 <!-- align -->
 <g stroke-width="1.200">
  <path d="M623 148h12M623 154h9M623 160h17M659 148h14M661 154h10M658 160h17M695 148h14M700 154h9M694 160h16M729 148h16M729 154h16M729 160h16"/>
  <path d="M762 145v18M781 145v18M767 152h9M767 157h9M767 162h9"/>
  <path d="M806 147h12M806 154h12M806 161h12"/>
 </g>
 <path stroke="#2f6fe0" d="M769 147l-2 2 2 2M774 147l2 2-2 2M771 145v1"/>
 <path stroke="#2f6fe0" d="M802 145v20M799 148l3-3 3 3M799 162l3 3 3-3"/>
 <!-- shading -->
 <path d="M870 148l5-4 6 6-5 5h-5l-1-3zM879 146l3 7"/>
 <rect x="868" y="159" width="18" height="4.500" rx="1.500" stroke="#888" />
 <path stroke="#e03030" d="M874 163l6-4"/>
 <!-- borders -->
 <path d="M919 146h17v17h-17z"/><path stroke="#888" stroke-dasharray="1 1.500" d="M927.500 146v17M919 154.500h17"/>
 <!-- style arrows -->
 <path stroke="#bbb" d="M1221 119l3-3 3 3"/>
 <path stroke="#333" stroke-width="1.300" d="M1221 137l3 3 3-3"/>
 <path stroke="#666" d="M1221 155h6M1221 158l3 3 3-3"/>
 <!-- styles -->
 <path d="M1265 132l9-24h1l5 13M1268 124h9"/>
 <path stroke="#d2541c" d="M1279 128l6-7 2 2-6 7zM1275 133l4-5 2 2z"/>
 <!-- search -->
 <circle cx="1369" cy="118" r="9"/><path d="M1376 125l9 10"/>
</svg>
</body></html>
